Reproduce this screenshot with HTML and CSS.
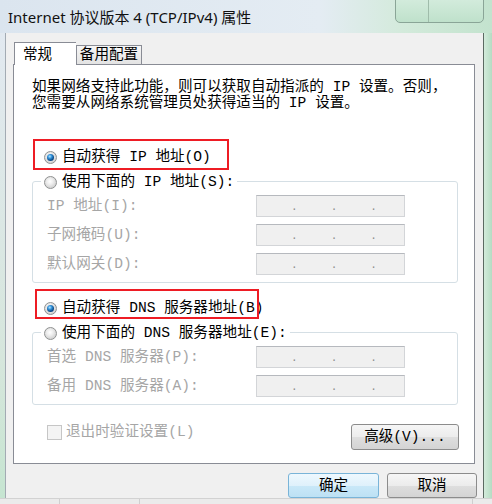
FILE: index.html
```html
<!DOCTYPE html>
<html lang="zh-CN">
<head>
  <meta charset="UTF-8">
  <title>Internet 协议版本 4 (TCP/IPv4) 属性</title>
  <link rel="stylesheet" href="styles.css">
</head>
<body>

<div class="titlebar">
  <span class="title">Internet 协议版本 4 (TCP/IPv4) 属性</span>
  <div class="caption"><span></span><span></span></div>
</div>

<div class="frame">
  <div class="frame-left"></div>
  <div class="window">
    <div class="tabs">
      <div class="tab active">常规</div>
      <div class="tab">备用配置</div>
    </div>

    <div class="panel">
      <p class="intro">如果网络支持此功能，则可以获取自动指派的 IP 设置。否则，<br>您需要从网络系统管理员处获得适当的 IP 设置。</p>

      <div class="option"><span class="radio on"></span>自动获得 IP 地址(O)</div>
      <div class="group">
        <div class="legend"><span class="radio"></span>使用下面的 IP 地址(S):</div>
        <div class="fields">
          <span>IP 地址(I):</span>
          <div class="ip"><span>.</span><span>.</span><span>.</span></div>
          <span>子网掩码(U):</span>
          <div class="ip"><span>.</span><span>.</span><span>.</span></div>
          <span>默认网关(D):</span>
          <div class="ip"><span>.</span><span>.</span><span>.</span></div>
        </div>
      </div>

      <div class="option second"><span class="radio on"></span>自动获得 DNS 服务器地址(B)</div>
      <div class="group">
        <div class="legend"><span class="radio"></span>使用下面的 DNS 服务器地址(E):</div>
        <div class="fields">
          <span>首选 DNS 服务器(P):</span>
          <div class="ip"><span>.</span><span>.</span><span>.</span></div>
          <span>备用 DNS 服务器(A):</span>
          <div class="ip"><span>.</span><span>.</span><span>.</span></div>
        </div>
      </div>

      <div class="bottom">
        <div class="check"><span class="box"></span>退出时验证设置(L)</div>
        <button class="btn advanced">高级(V)...</button>
      </div>

      <!-- 红框标注 -->
      <div class="marker m1"></div>
      <div class="marker m2"></div>
    </div>

    <div class="actions">
      <button class="btn ok">确定</button>
      <button class="btn cancel">取消</button>
    </div>
  </div>
  <div class="edge"></div>
</div>

<div class="taskstrip"></div>

</body>
</html>
```

FILE: styles.css
```css
* {
  box-sizing: border-box;
}

body {
  margin: 0;
  width: 492px;
  height: 504px;
  overflow: hidden;
  font-family: "Liberation Mono", "Noto Sans CJK SC", monospace;
  font-size: 14.6px;
  line-height: 16px;
  color: #000;
  background: #e8e8e8;
}

.titlebar {
  position: relative;
  height: 33px;
  display: flex;
  align-items: center;
  padding-left: 8px;
  background: linear-gradient(90deg, #dbe5ef 0%, #e4ecf3 65%, #d3eadb 82%, #c3e3ce 100%);
}

.title {
  font-family: "Noto Sans", "Noto Sans CJK SC", sans-serif;
  font-size: 15px;
  color: #111;
}

.caption {
  position: absolute;
  top: -3px;
  right: 8px;
  width: 89px;
  height: 26px;
  display: flex;
  border: 1px solid #8aa597;
  border-radius: 0 0 5px 5px;
  background: linear-gradient(#d4ecdd, #bfe1cb);
}

.caption span:first-child {
  width: 33px;
  border-right: 1px solid #9fbcaa;
}

.frame {
  display: flex;
  height: 465px;
}

.frame-left {
  width: 5px;
  background: linear-gradient(#e2e9f0, #d6e6dc 70%, #c6e5d1);
}

.window {
  width: 478px;
  border-left: 1px solid #a3abb3;
  background: #f0f0f0;
  padding: 9px 0 0 7px;
}

.edge {
  width: 9px;
  background: linear-gradient(90deg, #5b6a62 0 1px, #d3ebdb 1px, #b5dcc3);
}

.taskstrip {
  height: 6px;
  border-top: 1px solid #d2d2d2;
  background:
    linear-gradient(90deg, transparent 59px, #cfcfcf 59px, #cfcfcf 60px, transparent 60px,
      transparent 139px, #cfcfcf 139px, #cfcfcf 140px, transparent 140px,
      transparent 472px, #cfcfcf 472px, #cfcfcf 473px, transparent 473px),
    #ebebeb;
}

/* 选项卡 */
.tabs {
  display: flex;
  align-items: flex-end;
  height: 22px;
  padding-left: 1px;
}

.tab {
  position: relative;
  height: 19px;
  width: 66px;
  border: 1px solid #898c95;
  border-bottom: none;
  text-align: center;
  line-height: 18px;
  background: linear-gradient(#f6f6f6, #e3e3e3);
}

.tab.active {
  z-index: 1;
  width: 62px;
  height: 23px;
  margin-bottom: -1px;
  padding-left: 8px;
  text-align: left;
  line-height: 24px;
  background: #fff;
  border-right: none;
}

.panel {
  position: relative;
  width: 462px;
  height: 400px;
  border: 1px solid #898c95;
  background: #fff;
  padding: 14px 16px 0 18px;
}

.intro {
  margin: 0;
}

.option {
  display: flex;
  align-items: center;
  gap: 5px;
  height: 18px;
  margin-top: 37px;
  padding-left: 12px;
}

.option.second {
  margin-top: 16px;
}

.radio {
  position: relative;
  flex: none;
  width: 13px;
  height: 13px;
  border-radius: 50%;
  border: 1px solid #8f9191;
  background: radial-gradient(circle at 45% 40%, #ffffff 0, #eeeeee 3px, #d6d6d6 6px);
}

.radio.on::after {
  content: "";
  position: absolute;
  left: 2px;
  top: 2px;
  width: 7px;
  height: 7px;
  border-radius: 50%;
  background: radial-gradient(circle at 40% 35%, #b4e6ff 0, #3191d9 2px, #0d4a86 4px);
}

.group {
  margin-top: 15px;
  border: 1px solid #d5dfe5;
  border-radius: 3px;
  padding: 0 0 7px 14px;
}

.legend {
  display: flex;
  align-items: center;
  gap: 5px;
  width: fit-content;
  height: 18px;
  margin: -9px 0 0 -6px;
  padding: 0 3px;
  background: #fff;
}

.fields {
  display: grid;
  grid-template-columns: 209px 149px;
  row-gap: 7px;
  align-items: center;
  margin-top: 4px;
  color: #a6a6a6;
}

.ip {
  height: 22px;
  display: flex;
  justify-content: center;
  align-items: flex-end;
  gap: 33px;
  padding: 0 0 3px 7px;
  border: 1px solid #d3d5d8;
  border-top-color: #b6b9be;
  background: #f0f0f0;
  color: #8c8c8c;
  font-size: 11px;
  line-height: 12px;
}

.bottom {
  display: flex;
  justify-content: space-between;
  align-items: flex-start;
  margin-top: 19px;
  padding-left: 15px;
}

.check {
  display: flex;
  align-items: center;
  gap: 4px;
  height: 16px;
  color: #a6a6a6;
}

.box {
  width: 15px;
  height: 15px;
  border: 1px solid #c6c6c6;
  background: #f4f4f4;
}

.btn {
  height: 25px;
  padding: 0;
  font: inherit;
  color: #000;
  border: 1px solid #8c8c8c;
  border-radius: 3px;
  background: linear-gradient(#f6f6f6 0%, #ececec 50%, #dedede 51%, #d4d4d4 100%);
}

.btn.advanced {
  width: 108px;
  height: 26px;
  margin-right: -1px;
}

.btn.ok {
  width: 91px;
  border-color: #79b4d8;
  background: linear-gradient(#eef8fe 0%, #dff1fb 50%, #c9e8f8 51%, #bde1f4 100%);
}

.btn.cancel {
  width: 90px;
}

.actions {
  display: flex;
  justify-content: flex-end;
  gap: 8px;
  margin-top: 9px;
  padding-right: 6px;
}

.marker {
  position: absolute;
  border: 2px solid #ee1c24;
}

.marker.m1 {
  left: 19px;
  top: 74px;
  width: 196px;
  height: 31px;
}

.marker.m2 {
  left: 21px;
  top: 224px;
  width: 224px;
  height: 30px;
}
```
